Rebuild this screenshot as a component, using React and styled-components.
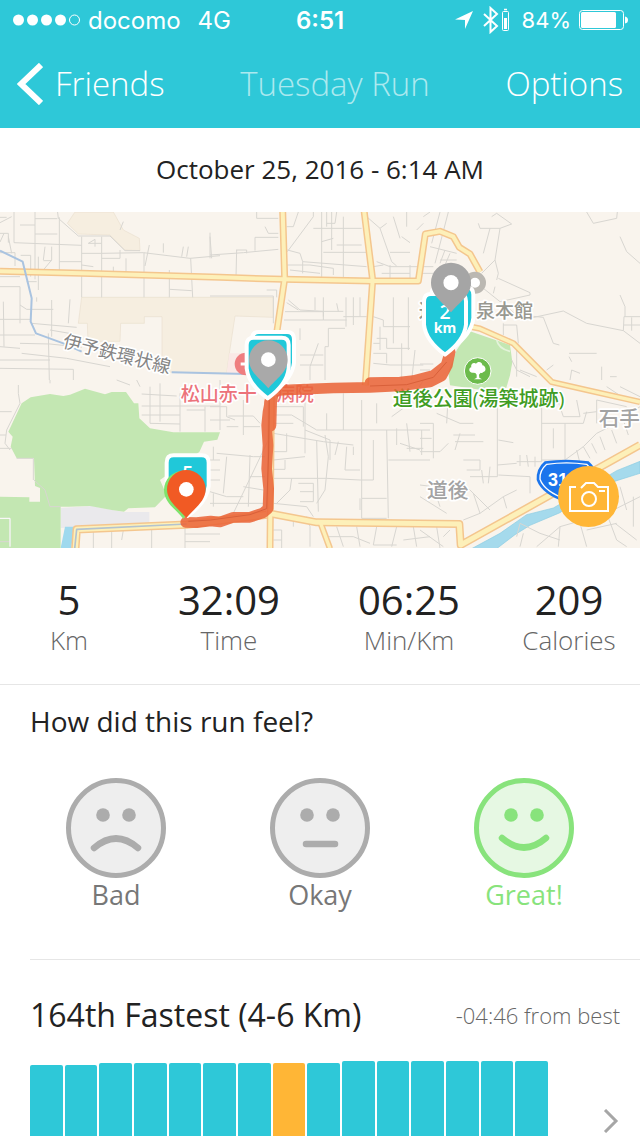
import { useState } from "react"
import styled, { createGlobalStyle } from "styled-components"

const GlobalStyle = createGlobalStyle`
    * {
        box-sizing: border-box;
    }
    body {
        margin: 0;
        background: #fff;
    }
`;

const Screen = styled.div`
    height: 100vh;
    overflow-y: auto;
    scrollbar-width: none;
    background: #fff;
    color: #222;
    font-family: "Open Sans", "Noto Sans CJK JP", sans-serif;
`;

const Header = styled.header`
    background: #2ec8d8;
    color: #fff;
`;

const StatusBar = styled.div`
    display: grid;
    grid-template-columns: 1fr auto 1fr;
    align-items: center;
    height: 40px;
    padding: 0 12px;
    font-family: Inter, sans-serif;
    font-size: 24px;
`;

const StatusGroup = styled.div`
    display: flex;
    align-items: center;
    justify-content: ${props => props.$end ? "flex-end" : "flex-start"};
    gap: 8px;
`;

const Network = styled.span`
    margin-left: 9px;
`;

const Charge = styled.span`
    margin-left: 4px;
    font-size: 22px;
`;

const Clock = styled.span`
    font-weight: 600;
`;

const NavBar = styled.nav`
    display: flex;
    align-items: center;
    justify-content: space-between;
    height: 88px;
    padding: 0 17px;
`;

const NavButton = styled.button`
    display: flex;
    align-items: center;
    gap: 12px;
    padding: 0;
    border: 0;
    background: none;
    color: #fff;
    font: inherit;
    font-size: 33px;
    font-weight: 350;
    line-height: 40px;
    cursor: pointer;
`;

const Title = styled.h1`
    margin: 0;
    font-size: 33px;
    font-weight: 350;
    line-height: 40px;
    color: #abe9ef;
`;

const DateLine = styled.p`
    margin: 0;
    height: 84px;
    font-size: 26px;
    font-weight: 450;
    line-height: 82px;
    text-align: center;
`;

const MapArea = styled.section`
    position: relative;
    overflow: hidden;
`;

const MapCanvas = styled.svg`
    display: block;
    width: 100%;
    height: auto;
`;

const CameraButton = styled.button`
    position: absolute;
    right: 21px;
    bottom: 21px;
    display: flex;
    align-items: center;
    justify-content: center;
    width: 61px;
    height: 61px;
    padding: 0;
    border: 0;
    border-radius: 50%;
    background: #ffb636;
    cursor: pointer;
`;

const Stats = styled.dl`
    display: grid;
    grid-template-columns: 69fr 91fr 89fr 71fr;
    margin: 0;
    padding: 28px 0;
    border-bottom: 1px solid #e6e6e6;
    text-align: center;
`;

const Stat = styled.div`
    display: flex;
    flex-direction: column-reverse;
`;

const StatValue = styled.dd`
    margin: 0;
    font-size: 40px;
    font-weight: 500;
    line-height: 48px;
`;

const StatLabel = styled.dt`
    font-size: 26px;
    font-weight: 350;
    line-height: 32px;
    color: #666;
`;

const Feel = styled.fieldset`
    margin: 0 0 0 30px;
    padding: 0 0 47px;
    border: 0;
    border-bottom: 1px solid #e6e6e6;
`;

const FeelTitle = styled.legend`
    padding: 0;
    font-size: 28px;
    font-weight: 400;
    line-height: 72px;
`;

const FaceRow = styled.div`
    display: flex;
    justify-content: space-between;
    padding: 21px 66px 0 36px;
`;

const FaceOption = styled.label`
    display: flex;
    flex-direction: column;
    align-items: center;
    width: 100px;
    font-size: 27px;
    font-weight: 500;
    line-height: 34px;
    color: ${props => props.$active ? "#88e37c" : "#777"};
    cursor: pointer;
`;

const FaceInput = styled.input`
    position: absolute;
    width: 1px;
    height: 1px;
    margin: 0;
    opacity: 0;
`;

const FaceIcon = styled.svg`
    display: block;
    width: 100px;
    height: 100px;
    fill: none;
    stroke: ${props => props.$active ? "#88e37c" : "#acacac"};
`;

const Ranking = styled.section`
    padding: 31px 20px 0 30px;
`;

const RankingHead = styled.div`
    display: flex;
    align-items: center;
    justify-content: space-between;
`;

const RankingTitle = styled.h2`
    margin: 0;
    font-size: 32px;
    font-weight: 400;
    line-height: 48px;
`;

const FromBest = styled.span`
    font-size: 22px;
    font-weight: 350;
    line-height: 48px;
    color: #666;
`;

const ChartRow = styled.div`
    display: flex;
    align-items: center;
    gap: 54px;
    padding-top: 22px;
`;

const Bars = styled.div`
    display: flex;
    flex: 1;
    align-items: flex-end;
    gap: 2px;
    height: 120px;
`;

const Bar = styled.div`
    flex: 1;
    border-radius: 2px 2px 0 0;
    background: ${props => props.$current ? "#ffb636" : "#2ec8d8"};
`;

const MoreButton = styled.button`
    display: flex;
    padding: 0;
    border: 0;
    background: none;
    cursor: pointer;
`;

// minor streets, drawn sheet by sheet
const streets = [
    { x: 0, y: -6, d: "M0,70H25V98M42,6V98L245,106M0,22H20M35,20L0,38M105,6V208M60,45H105M105,26H172M105,72H172M178,22V182M0,96L12,70M25,80L35,130M0,128H45V168M62,136H92V200M115,140V240M135,110L130,150M155,110V150L130,180M130,152H155M178,155H245M245,80V262M305,80V262M245,130H305M245,165L280,170M305,100H265L285,88V110M305,130L430,128L570,145L660,137M360,120V145H305M378,145V185M340,170V188M432,128V262M448,105L435,168M490,100V128M550,110L545,140M565,110L560,140M630,68V145M572,145L578,262M508,180V262M510,238L575,242M0,200H60M0,230H60V340M80,215H110M110,262V275M10,275L12,410M0,328H90M60,285L80,298H160M155,270V380M210,268L205,340M95,340L230,352M150,360L220,372M0,375H105M0,410L60,415M60,400L150,402L245,412M145,370L148,510M0,450H150M65,430L200,445L330,470M0,475L220,478M220,478V510M172,0L175,25L235,78H330L375,122H420M360,60L370,35" },
    { x: 630, y: -6, d: "M140,6V25H205M165,50L175,70H205M135,82H205M135,82V122M0,135L100,128L205,118M80,120L78,200M78,120H110V130M0,80L5,145M250,50L265,6M232,125L310,20V6M250,50H230M335,6V210M350,6V50M365,6V120M380,6L375,40M400,20V220M310,55H455M350,40H375M335,95L370,85M340,127H470M380,105H455M232,120L270,130L278,155L470,170M232,165H300L370,175V195M240,180L330,190M278,155V190M470,20L510,55L545,155L560,168M510,55L530,40M550,20L570,85M590,6V50M575,80L600,98M540,127H600M500,155L540,170H640M540,165V220M600,165V210M490,170L520,165M515,190H600M620,60L640,40M235,270L270,300L340,304H400M315,262V300M340,262V330H222M230,278L265,300M225,305H340V320M380,280L385,304M408,262V350M430,262V345M450,262V320M340,330H410M400,320H470M355,355H405M355,355V410H345V510M270,355V390M235,390V435M325,400L300,470V510M270,435H340M270,465H340M490,320L520,330V350H600M500,385H530V415H600M510,350V420M550,262V400M595,262V420M490,400H510M490,460L540,465H640M490,430H530V460M575,400V510M615,420L605,510M170,240H200V262M0,258H190V340" },
    { x: 1260, y: -6, d: "M500,6L520,40L590,25L592,6M600,80L620,125L660,160M175,40L180,55H240L275,42L230,10L215,20M240,55L225,150L235,190L230,210M210,55L190,130M225,150L185,190M190,235L240,275M240,275L330,255V248L235,205M225,230L220,250M245,275L305,330L430,303L500,340L610,362L612,320H660M610,362L660,400M600,255L615,290V320M635,322V362M612,345H660M330,318L370,322L400,400L418,405M447,430H530M447,440L455,455M250,340V375M250,345H290L295,400M275,450L290,480L330,500M290,420V500M300,480L350,500M380,480L400,465M450,510L455,480L480,490M545,510V470M570,500H590M85,6L45,160M60,6L35,100M10,20L30,6M30,110L110,130M75,120L60,160M90,130L75,165M60,150H110M0,170H40M0,190H40M0,462H40M0,480H30" },
    { x: 0, y: 504, d: "M55,15V40L60,70L20,150L15,190L30,210M0,95H35M0,165H18M0,205H35M50,235H100V300M150,0V10M350,0L390,15M410,0L420,20M425,42L530,48M450,20V130M480,10V125M425,78H660M425,105H540M540,40V155M615,80V155M660,0V150M560,90H615M450,130L540,132M620,240H660M625,270H660M630,300H660M640,340V380M640,200V240M102,300L135,330L150,380H182M0,415H30V500M0,485H30M280,452V505M335,450V505M455,445V505M370,450L365,480M555,440V505M555,462H660M555,485H630" },
    { x: 630, y: 504, d: "M0,80H50V110L75,120M55,108H130L150,130M0,120H60M100,60V165M100,140H150M50,140H85M20,220L130,230H165M50,230L40,340M0,335L50,350H100M0,370H160M120,225L115,380M120,290H165M100,320L160,330M175,180L70,400M190,80H280V140M190,105H245L320,150H660M190,130H250M190,160L340,185L430,195M230,160V215H190M285,60V220M285,150L360,180V240M320,180L325,395M345,165L355,230L345,330L320,370M190,240L285,230M190,268H225V240M190,295H350L450,300M245,295L240,330L200,370M265,310H310V365H270M270,335H310M190,370L290,380L310,410M385,185L375,225M410,200L405,270H450M430,200V225M455,60V355H530M490,180V300H450M500,130V70M530,150L535,415M535,240H660M590,130L600,215M560,145V195M570,190L630,210M635,150V225M590,205H640M450,355V390M530,415H455V355M380,440L400,500M350,470H430L480,490M440,440L450,500M500,440L490,495H560M560,440L545,500M610,440L620,500M580,480L660,470M190,450H215V505M250,410V440M290,410L300,440V500M190,480H215M640,0L600,70L545,110M400,40V150M350,100V150" },
    { x: 1260, y: 504, d: "M0,130H40V235M0,215H60L85,190M35,175H0M50,100L120,130H160M85,40L80,130M100,165H165M105,185H190M120,160L105,210M232,80V290H150M235,180L280,188M232,255L290,250M130,240H180V270H140M0,315L40,320L60,380M235,285L330,290V340M210,260L205,310M185,270L190,310M300,225V258M320,225L325,260M345,230V260M365,60V245H290M365,130H490L500,95M400,20L430,110H480L470,60M400,145V205M435,130V240H365M530,95L490,100M600,20L660,50M560,20L620,60M530,60L620,80M530,160L590,130L660,80M435,240L490,200L530,160M470,210L480,250M490,200L510,235M515,190L530,220M540,170L555,210M575,150L590,190M610,120L625,165M530,60V130M160,340L180,400L250,350L290,330M180,400L130,420M250,350L260,385M120,300L210,390M0,350L80,400M0,450L70,500M50,440L60,505M90,450L70,470M290,470L300,430L360,460L420,480M300,500L310,460M350,500L420,440L560,400L660,350M420,440L415,500M480,430L500,500M560,400L590,480L620,500M640,350V440M600,320L620,390M585,430L650,480M500,450L590,430" },
];

const roads = [
    { d: "M0,178L245,184L660,196L850,202L1116,207H1255L1276,66L1320,58L1360,74L1378,106L1410,126L1440,180", w: 12 },
    { d: "M848,-6L854,200L832,350L815,460L810,1008", w: 12 },
    { d: "M1092,-6L1118,204L1096,520", w: 12 },
    { d: "M808,904L950,931L1378,936L1382,999L1920,699", w: 15 },
    { d: "M962,934L990,1010", w: 10 },
    { d: "M226,1010L230,952L560,938L800,908", w: 16 },
    { d: "M1410,344L1440,350L1540,394L1655,510L1760,534L1920,570", w: 10 },
];

const Shield = ({ x, y, value, unit }) => (
    <g transform={`translate(${x} ${y})`}>
        <path d="M-42,6H42Q63,6 63,28V98Q58,146 0,188Q-58,146 -63,98V28Q-63,6 -42,6Z" fill="#20c8d9" stroke="#fff" strokeWidth="12" strokeLinejoin="round" />
        <g fill="#fff" textAnchor="middle" fontWeight="600">
            {value && <text y="80" fontSize="58">{value}</text>}
            {unit && <text y="124" fontSize="42" fontWeight="700">{unit}</text>}
        </g>
    </g>
);

const Pin = ({ x, y, color, r = 58 }) => (
    <g transform={`translate(${x} ${y}) scale(${r / 58})`}>
        <path d="M0,86C-22,58 -58,38 -58,0A58,58 0 1 1 58,0C58,38 22,58 0,86Z" fill={color} />
        <circle r="22" fill="#fff" />
    </g>
);

const RunMap = () => (
    <MapCanvas viewBox="0 0 1920 1008" role="img" aria-label="Route of the run">
        <rect width="1920" height="1008" fill="#f9f4ed" />
        <g fill="#f6eee0" stroke="#eadfce" strokeWidth="2">
            <path d="M225,0H340L370,54L418,79L420,116L375,114L330,69L235,66L202,34Z" />
            <path d="M245,256H820V316L705,312L688,424L680,484L486,480V314H433V334H362L360,388H264L262,334H235Z" />
        </g>
        <path d="M688,424H740V484H680Z" fill="#fae9e6" />
        <path d="M182,888L275,882L370,900H448V936L182,948Z" fill="#eae9ec" />
        <path d="M195,944H222L214,1008H182Z" fill="#9fd9ee" />
        <g fill="#c3e7b2">
            <path d="M25,659L65,574L92,556L150,546L190,552L210,548L255,530L315,547L335,540H378L402,574H415L418,619L450,649L520,661H660L652,683L612,689L598,720L480,804L500,850L465,886L385,889L372,899L335,894L270,882L205,884H182V1008H0V854L88,856V869H120V828L105,822L102,739H50L32,704L38,674Z" />
            <path d="M1370,414L1410,358L1530,399L1537,450L1530,490L1518,530L1460,536L1350,520L1345,480Z" />
        </g>
        <path d="M1490,384Q1495,410 1530,418" fill="none" stroke="#e3f3da" strokeWidth="5" />
        <path d="M1415,1010L1500,964L1580,908L1660,888L1760,830L1850,776L1920,748V784L1850,806L1760,840L1680,902L1590,940L1545,968L1490,1010Z" fill="#a5daec" stroke="#8bcbe2" strokeWidth="2" />
        <g fill="none" stroke="#d8d6d1" strokeWidth="3">
            {streets.map((sheet, i) => (
                <path key={i} d={sheet.d} transform={`translate(${sheet.x} ${sheet.y})`} />
            ))}
        </g>
        <path d="M0,919H30V1004" fill="none" stroke="#fff" strokeWidth="3" />
        <g fill="none" strokeLinejoin="round">
            {roads.map((road, i) => <path key={i} d={road.d} stroke="#f4c68e" strokeWidth={road.w + 9} />)}
            {roads.map((road, i) => <path key={i} d={road.d} stroke="#fdf0b9" strokeWidth={road.w} />)}
            <path d="M224,1010L230,952L560,936" stroke="#b3c3cf" strokeWidth="5" />
            <path d="M0,116L68,149L95,259L92,329L108,364L190,394L245,419M515,481L740,486" stroke="#a9c3e0" strokeWidth="6" />
        </g>

        <g stroke="#fff" strokeWidth="10" strokeLinejoin="round" paintOrder="stroke" fontWeight="500">
            <text x="186" y="405" transform="rotate(14 186 405)" fontSize="55" fontWeight="400" fill="#858585">伊予鉄環状線</text>
            <text x="1256" y="318" fontSize="57" fill="#989890">道</text>
            <text x="1428" y="318" fontSize="57" fill="#989890">泉本館</text>
            <text x="542" y="568" fontSize="57" fill="#ec737b">松山赤十</text>
            <text x="828" y="568" fontSize="57" fill="#ec737b">病院</text>
            <text x="1178" y="582" fontSize="60" fill="#3f9c23">道後公園(湯築城跡)</text>
            <text x="1796" y="642" fontSize="62" fill="#a3a3a3">石手</text>
            <text x="1281" y="859" fontSize="62" fill="#a3a3a3">道後</text>
        </g>

        <circle cx="738" cy="456" r="34" fill="#ef7e80" />
        <path d="M722,456H742" stroke="#fff" strokeWidth="9" />
        <g>
            <circle cx="1433" cy="477" r="40" fill="#6cbb4c" stroke="#fff" strokeWidth="3" />
            <path d="M1420,482C1405,484 1405,467 1414,466C1411,454 1424,450 1428,455C1434,446 1448,450 1447,460C1457,461 1461,478 1450,480Q1446,484 1442,482L1437,488L1438,497L1446,502H1422L1430,497V488L1426,483Z" fill="#fff" />
        </g>
        <g>
            <path d="M1634,748Q1700,738 1766,748Q1792,770 1790,804Q1774,848 1700,872Q1626,848 1610,804Q1608,770 1634,748Z" fill="#1b75ec" />
            <path d="M1640,757Q1700,748 1760,757Q1782,776 1780,802Q1766,840 1700,862Q1634,840 1620,802Q1618,776 1640,757Z" fill="none" stroke="#fff" strokeWidth="4" />
            <text x="1644" y="823" fontSize="54" fontWeight="700" fill="#fff" fontFamily="Liberation Sans, sans-serif">31</text>
        </g>
        <circle cx="1425" cy="212" r="24" fill="#fff" stroke="#bbb8b2" strokeWidth="18" />

        <g fill="none" stroke="#ea6337" strokeLinejoin="round" strokeLinecap="round" opacity="0.86">
            <path d="M557,931L590,932L632,927L660,930L700,916L750,916L790,902L804,890L806,830L800,770L804,700L800,640L804,600L812,560L818,536L900,532L1000,528L1110,526L1200,522L1290,510L1325,492L1342,460L1350,420" strokeWidth="32" />
            <path d="M1110,512L1200,510L1240,506L1300,490L1338,460L1350,420" strokeWidth="32" />
            <path d="M810,640L812,570L820,530" strokeWidth="38" />
        </g>
        <path d="M565,928L632,924L750,908L800,890L806,720L808,560M1110,522L1220,518L1300,496L1340,450" fill="none" stroke="#d9603a" strokeWidth="3" />

        <Shield x={819} y={354} />
        <Shield x={803} y={371} />
        <Pin x={805} y={443} color="#a9a9a9" />
        <Shield x={1357} y={220} />
        <Shield x={1335} y={240} value="2" unit="km" />
        <Pin x={1353} y={212} color="#a5a5a5" r={60} />
        <Shield x={563} y={724} value="5" />
        <Pin x={550} y={834} color="#7fe36d" />
        <Pin x={559} y={832} color="#f15a24" />
    </MapCanvas>
);

const mouths = {
    Bad: "M28,70Q50,51 72,70",
    Okay: "M36,66H65",
    Great: "M28,60Q50,79 72,60",
};

const feelings = [
    { id: "Bad", label: "Bad" },
    { id: "Okay", label: "Okay" },
    { id: "Great", label: "Great!" },
];

const Face = ({ id, active }) => (
    <FaceIcon $active={active} viewBox="0 0 100 100" aria-hidden="true">
        <circle cx="50" cy="50" r="47.5" strokeWidth="5" fill={active ? "#e6f8e3" : "#eee"} />
        <circle cx="37" cy="37" r="6.8" stroke="none" fill={active ? "#88e37c" : "#acacac"} />
        <circle cx="63" cy="37" r="6.8" stroke="none" fill={active ? "#88e37c" : "#acacac"} />
        <path d={mouths[id]} strokeWidth="6.5" strokeLinecap="round" />
    </FaceIcon>
);

const stats = [
    { value: "5", label: "Km" },
    { value: "32:09", label: "Time" },
    { value: "06:25", label: "Min/Km" },
    { value: "209", label: "Calories" },
];

const runs = [116, 116, 118, 118, 118, 118, 118, 118, 118, 120, 120, 120, 120, 120, 120];
const currentRun = 7;

const App = () => {
    const [feeling, setFeeling] = useState("Great");

    return (
        <Screen>
            <GlobalStyle />
            <Header>
                <StatusBar>
                    <StatusGroup>
                        <svg width="68" height="12" viewBox="0 0 68 12" fill="#fff">
                            <circle cx="6.5" cy="6" r="5.5" />
                            <circle cx="20.5" cy="6" r="5.5" />
                            <circle cx="34.5" cy="6" r="5.5" />
                            <circle cx="48.5" cy="6" r="5.5" />
                            <circle cx="62.5" cy="6" r="5" fill="none" stroke="#fff" />
                        </svg>
                        <span>docomo</span>
                        <Network>4G</Network>
                    </StatusGroup>
                    <Clock>6:51</Clock>
                    <StatusGroup $end>
                        <svg width="20" height="20" viewBox="0 0 20 20" fill="#fff">
                            <path d="M19,1L11,19V10L1,9.5Z" />
                        </svg>
                        <svg width="28" height="28" viewBox="0 0 28 28" fill="none" stroke="#fff">
                            <path d="M2,8L15,20L8.5,26V2L15,8L2,20" strokeWidth="2" />
                            <rect x="20.5" y="5.5" width="6" height="19" rx="1" />
                            <path d="M22,3.5H25" strokeWidth="1.5" />
                            <rect x="22" y="12" width="3" height="11" fill="#fff" stroke="none" />
                        </svg>
                        <Charge>84%</Charge>
                        <svg width="49" height="20" viewBox="0 0 49 20" fill="none">
                            <rect x="0.5" y="0.5" width="44" height="19" rx="3" stroke="#fff" />
                            <rect x="2" y="2" width="35" height="16" rx="1.5" fill="#fff" />
                            <path d="M46,6.5Q49,7 49,10T46,13.5Z" fill="#fff" />
                        </svg>
                    </StatusGroup>
                </StatusBar>
                <NavBar>
                    <NavButton type="button">
                        <svg width="26" height="42" viewBox="0 0 26 42" fill="none" stroke="#fff" strokeWidth="6">
                            <path d="M24,2L4,21L24,40" />
                        </svg>
                        Friends
                    </NavButton>
                    <Title>Tuesday Run</Title>
                    <NavButton type="button">Options</NavButton>
                </NavBar>
            </Header>

            <DateLine>October 25, 2016 - 6:14 AM</DateLine>

            <MapArea>
                <RunMap />
                <CameraButton type="button" aria-label="Add photo">
                    <svg width="40" height="30" viewBox="0 0 40 30" fill="none" stroke="#fff" strokeWidth="2">
                        <path d="M7,5H1V29H39V5H29L25,1H17L12,6" />
                        <circle cx="20" cy="17" r="7" />
                        <path d="M30,9H36" />
                    </svg>
                </CameraButton>
            </MapArea>

            <Stats>
                {stats.map(stat => (
                    <Stat key={stat.label}>
                        <StatLabel>{stat.label}</StatLabel>
                        <StatValue>{stat.value}</StatValue>
                    </Stat>
                ))}
            </Stats>

            <Feel>
                <FeelTitle>How did this run feel?</FeelTitle>
                <FaceRow>
                    {feelings.map(item => (
                        <FaceOption key={item.id} $active={feeling === item.id}>
                            <FaceInput
                                type="radio"
                                name="feeling"
                                checked={feeling === item.id}
                                onChange={() => setFeeling(item.id)}
                            />
                            <Face id={item.id} active={feeling === item.id} />
                            {item.label}
                        </FaceOption>
                    ))}
                </FaceRow>
            </Feel>

            <Ranking>
                <RankingHead>
                    <RankingTitle>164th Fastest (4-6 Km)</RankingTitle>
                    <FromBest>-04:46 from best</FromBest>
                </RankingHead>
                <ChartRow>
                    <Bars>
                        {runs.map((height, i) => (
                            <Bar key={i} $current={i === currentRun} style={{ height }} />
                        ))}
                    </Bars>
                    <MoreButton type="button" aria-label="More runs">
                        <svg width="18" height="24" viewBox="0 0 18 24" fill="none" stroke="#a6a6a6" strokeWidth="3">
                            <path d="M3,1L14,12L3,23" />
                        </svg>
                    </MoreButton>
                </ChartRow>
            </Ranking>
        </Screen>
    )
}

export default App
